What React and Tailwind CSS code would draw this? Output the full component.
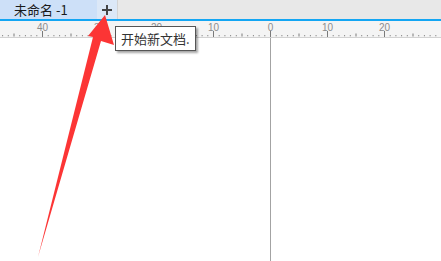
import React from "react";

const ORIGIN = 270;
const STEP = 5.7;

const RulerTicks = () => {
  const ticks = [];
  for (let u = -48; u <= 32; u++) {
    const x = ORIGIN + u * STEP + 0.5;
    if (x < 0 || x > 441) continue;
    if (u % 10 === 0) {
      ticks.push(<line key={u} x1={x} x2={x} y1={10} y2={16} stroke="#7a7a7a" strokeWidth="1" />);
      ticks.push(
        <text key={"t" + u} x={x} y={10} textAnchor="middle" fontSize="10" fill="#8c8c8c" fontFamily="'Liberation Sans', sans-serif">
          {Math.abs(u)}
        </text>
      );
    } else if (u % 5 === 0) {
      ticks.push(<line key={u} x1={x} x2={x} y1={12.5} y2={15.5} stroke="#7a7a7a" strokeWidth="1" />);
    } else {
      ticks.push(<rect key={u} x={x - 0.5} y={14} width="1" height="1.3" fill="#8a8a8a" />);
    }
  }
  return (
    <svg width="441" height="16" className="block">
      {ticks}
    </svg>
  );
};

const App = () => {
  return (
    <div
      className="relative w-[441px] h-[261px] overflow-hidden bg-white"
      style={{ fontFamily: "'Noto Sans CJK SC', 'Liberation Sans', sans-serif" }}
    >
      {/* tab bar */}
      <div className="flex h-[19px] bg-[#e8e8e8]">
        <div className="flex items-center w-[97px] pl-[14px] bg-[#cde0f8] text-[13px] leading-none text-[#1a1a1a]">
          未命名 -1
        </div>
        <div className="flex items-center justify-center w-[21px] bg-[#dce8f7] border-r border-[#d4d4d4]">
          <svg width="12" height="12" viewBox="0 0 12 12">
            <path d="M6 1v10M1 6h10" stroke="#444" strokeWidth="2" />
          </svg>
        </div>
      </div>
      <div className="h-[2px] bg-[#14a6f3]" />

      {/* ruler */}
      <div className="h-[17px] bg-[#f4f4f4] border-b border-[#d2d2d2]">
        <RulerTicks />
      </div>

      {/* canvas */}
      <div className="relative h-[223px]">
        <div className="absolute left-[270px] top-0 bottom-0 w-px bg-[#a3a3a3]" />
      </div>

      {/* tooltip */}
      <div className="absolute left-[115px] top-[26px] w-[81px] h-[25px] bg-white border border-[#555] shadow-[2px_2px_2px_rgba(0,0,0,0.35)] flex items-center pl-[5px] text-[13px] leading-none text-[#333]">
        开始新文档.
      </div>

      {/* red arrow */}
      <svg className="absolute left-0 top-0 pointer-events-none" width="441" height="261">
        <polygon points="105,15 114,45 101,41 38,257 93,37 88,36" fill="#fc3535" />
      </svg>
    </div>
  );
};

export default App;
